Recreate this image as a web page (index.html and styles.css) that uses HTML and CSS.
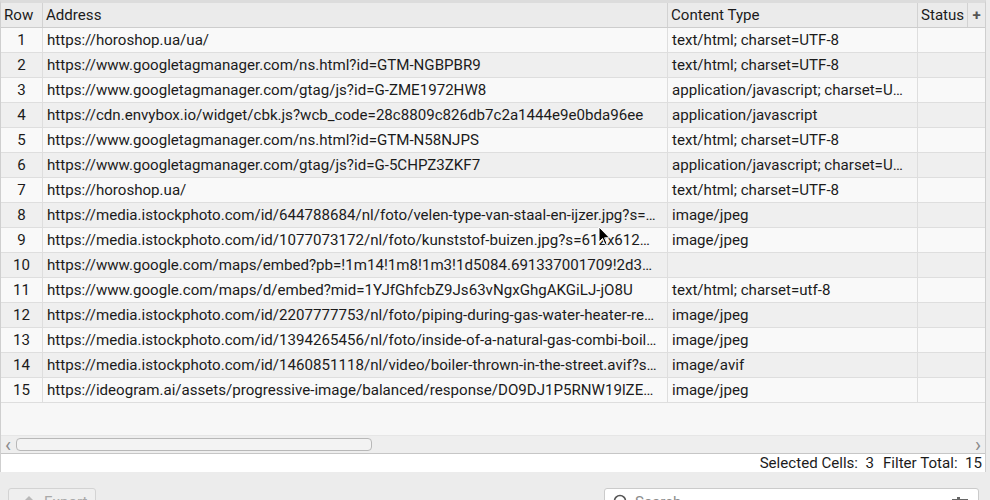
FILE: index.html
```html
<!DOCTYPE html>
<html lang="en">
<head>
  <meta charset="UTF-8">
  <title>Crawl Results</title>
  <link rel="stylesheet" href="styles.css">
</head>
<body>

  <!-- Results grid -->
  <div class="panel">
    <div class="viewport">
      <div class="head">
        <div class="hcell">Row</div>
        <div class="hcell">Address</div>
        <div class="hcell">Content Type</div>
        <div class="hcell">Status</div>
        <div class="hcell plus">+</div>
      </div>

      <div class="row"><div class="num">1</div><div class="cell">https://horoshop.ua/ua/</div><div class="cell">text/html; charset=UTF-8</div><div class="cell"></div></div>
      <div class="row"><div class="num">2</div><div class="cell">https://www.googletagmanager.com/ns.html?id=GTM-NGBPBR9</div><div class="cell">text/html; charset=UTF-8</div><div class="cell"></div></div>
      <div class="row"><div class="num">3</div><div class="cell">https://www.googletagmanager.com/gtag/js?id=G-ZME1972HW8</div><div class="cell">application/javascript; charset=UTF-8</div><div class="cell"></div></div>
      <div class="row"><div class="num">4</div><div class="cell">https://cdn.envybox.io/widget/cbk.js?wcb_code=28c8809c826db7c2a1444e9e0bda96ee</div><div class="cell">application/javascript</div><div class="cell"></div></div>
      <div class="row"><div class="num">5</div><div class="cell">https://www.googletagmanager.com/ns.html?id=GTM-N58NJPS</div><div class="cell">text/html; charset=UTF-8</div><div class="cell"></div></div>
      <div class="row"><div class="num">6</div><div class="cell">https://www.googletagmanager.com/gtag/js?id=G-5CHPZ3ZKF7</div><div class="cell">application/javascript; charset=UTF-8</div><div class="cell"></div></div>
      <div class="row"><div class="num">7</div><div class="cell">https://horoshop.ua/</div><div class="cell">text/html; charset=UTF-8</div><div class="cell"></div></div>
      <div class="row"><div class="num">8</div><div class="cell">https://media.istockphoto.com/id/644788684/nl/foto/velen-type-van-staal-en-ijzer.jpg?s=612x612&amp;w=0&amp;k=20</div><div class="cell">image/jpeg</div><div class="cell"></div></div>
      <div class="row"><div class="num">9</div><div class="cell">https://media.istockphoto.com/id/1077073172/nl/foto/kunststof-buizen.jpg?s=612x612&amp;w=0&amp;k=20</div><div class="cell">image/jpeg</div><div class="cell"></div></div>
      <div class="row"><div class="num">10</div><div class="cell">https://www.google.com/maps/embed?pb=!1m14!1m8!1m3!1d5084.691337001709!2d30.52</div><div class="cell"></div><div class="cell"></div></div>
      <div class="row"><div class="num">11</div><div class="cell">https://www.google.com/maps/d/embed?mid=1YJfGhfcbZ9Js63vNgxGhgAKGiLJ-jO8U</div><div class="cell">text/html; charset=utf-8</div><div class="cell"></div></div>
      <div class="row"><div class="num">12</div><div class="cell">https://media.istockphoto.com/id/2207777753/nl/foto/piping-during-gas-water-heater-repair.jpg</div><div class="cell">image/jpeg</div><div class="cell"></div></div>
      <div class="row"><div class="num">13</div><div class="cell">https://media.istockphoto.com/id/1394265456/nl/foto/inside-of-a-natural-gas-combi-boiler.jpg</div><div class="cell">image/jpeg</div><div class="cell"></div></div>
      <div class="row"><div class="num">14</div><div class="cell">https://media.istockphoto.com/id/1460851118/nl/video/boiler-thrown-in-the-street.avif?s=612</div><div class="cell">image/avif</div><div class="cell"></div></div>
      <div class="row"><div class="num">15</div><div class="cell">https://ideogram.ai/assets/progressive-image/balanced/response/DO9DJ1P5RNW19lZEaQk</div><div class="cell">image/jpeg</div><div class="cell"></div></div>

      <!-- mouse pointer from the capture -->
      <svg class="pointer" width="13" height="20" viewBox="0 0 13 20">
        <path d="M1 1 L1 16 L4.5 12.5 L7 18.5 L9 17.6 L6.6 11.8 L11.5 11.8 Z" fill="#000" stroke="#fff" stroke-width="1"/>
      </svg>
    </div>

    <!-- Horizontal scrollbar -->
    <div class="hscroll">
      <span class="arrow">&lsaquo;</span>
      <div class="track"><div class="thumb"></div></div>
      <span class="arrow">&rsaquo;</span>
    </div>

    <div class="statusbar">
      <span>Selected Cells:&nbsp; 3</span>
      <span>Filter Total:&nbsp; 15</span>
    </div>
  </div>

  <!-- Toolbar -->
  <div class="toolbar">
    <button class="export" disabled>
      <svg width="12" height="13" viewBox="0 0 12 13"><path d="M6 0 L12 6 L8 6 L8 13 L4 13 L4 6 L0 6 Z" fill="#b9b9b9"/></svg>
      Export
    </button>
    <div class="search">
      <svg width="16" height="16" viewBox="0 0 16 16"><circle cx="7" cy="7" r="5.5" fill="none" stroke="#555" stroke-width="1.6"/></svg>
      <span class="placeholder">Search</span>
      <svg class="filter" width="16" height="10" viewBox="0 0 16 10"><rect x="0" y="2" width="16" height="2" fill="#666"/><rect x="5" y="0" width="3" height="6" fill="#666"/><rect x="0" y="7" width="16" height="2" fill="#666"/></svg>
    </div>
  </div>

</body>
</html>
```

FILE: styles.css
```css
/* General */
body {
  margin: 0;
  width: 990px;
  height: 500px;
  overflow: hidden;
  font-family: Roboto, "Liberation Sans", sans-serif;
  font-size: 15.1px;
  color: #1b1b1b;
  background-color: #ececec;
}

.panel {
  width: 986px;
  box-sizing: border-box;
  border-left: 1px solid #cfcfcf;
  border-right: 1px solid #cfcfcf;
  border-top: 3px solid #dcdcdc;
  background-color: #f7f7f7;
}

.viewport {
  position: relative;
  height: 432px;
  overflow: hidden;
}

/* Header */
.head {
  display: grid;
  grid-template-columns: 42px 625px 250px 50px 17px;
  height: 25px;
  background-color: #ebebeb;
  border-bottom: 1px solid #cdcdcd;
  box-sizing: border-box;
}

.hcell {
  padding-left: 3px;
  line-height: 24px;
  border-right: 1px solid #d2d2d2;
  white-space: nowrap;
  overflow: hidden;
}

.hcell.plus {
  padding: 0;
  text-align: center;
  font-weight: bold;
  color: #555;
  border-right: none;
}

/* Rows */
.row {
  display: grid;
  grid-template-columns: 42px 625px 250px 67px;
  height: 25px;
  box-sizing: border-box;
  border-bottom: 1px solid #dedede;
  background-color: #f9f9f9;
}

.row:nth-of-type(odd) {
  background-color: #efefef;
}

.num, .cell {
  line-height: 24px;
  border-right: 1px solid #dedede;
  white-space: nowrap;
  overflow: hidden;
  text-overflow: ellipsis;
}

.num {
  text-align: center;
}

.cell {
  padding: 0 8px 0 4px;
}

.cell:last-child {
  border-right: none;
}

.pointer {
  position: absolute;
  left: 597px;
  top: 223px;
}

/* Scrollbar */
.hscroll {
  display: flex;
  align-items: center;
  height: 17px;
  background-color: #eeeeee;
  border-top: 1px solid #e6e6e6;
  border-bottom: 1px solid #c6c6c6;
}

.hscroll .arrow {
  width: 14px;
  text-align: center;
  color: #8a8a8a;
  font-size: 20px;
  line-height: 16px;
}

.track {
  flex: 1;
  height: 13px;
}

.thumb {
  width: 356px;
  height: 100%;
  box-sizing: border-box;
  margin-left: 1px;
  border: 1.5px solid #b8b8b8;
  border-radius: 4px;
  background-color: #f3f3f3;
}

.statusbar {
  display: flex;
  justify-content: flex-end;
  gap: 9px;
  height: 18px;
  line-height: 18px;
  padding-right: 3px;
  background-color: #fff;
}

/* Toolbar */
.toolbar {
  display: flex;
  justify-content: space-between;
  padding: 16px 11px 0 8px;
}

.export {
  display: flex;
  align-items: center;
  gap: 9px;
  width: 88px;
  height: 28px;
  padding: 0 0 0 14px;
  font-family: inherit;
  font-size: 15px;
  color: #a9a9a9;
  background-color: #efefef;
  border: 1px solid #d3d3d3;
  border-radius: 3px;
}

.search {
  display: flex;
  align-items: center;
  gap: 6px;
  width: 375px;
  height: 28px;
  box-sizing: border-box;
  padding: 0 6px 0 8px;
  background-color: #fff;
  border: 1px solid #cbcbcb;
  border-radius: 3px;
}

.placeholder {
  flex: 1;
  color: #8c8c8c;
}

.filter {
  margin-right: 4px;
}
```
